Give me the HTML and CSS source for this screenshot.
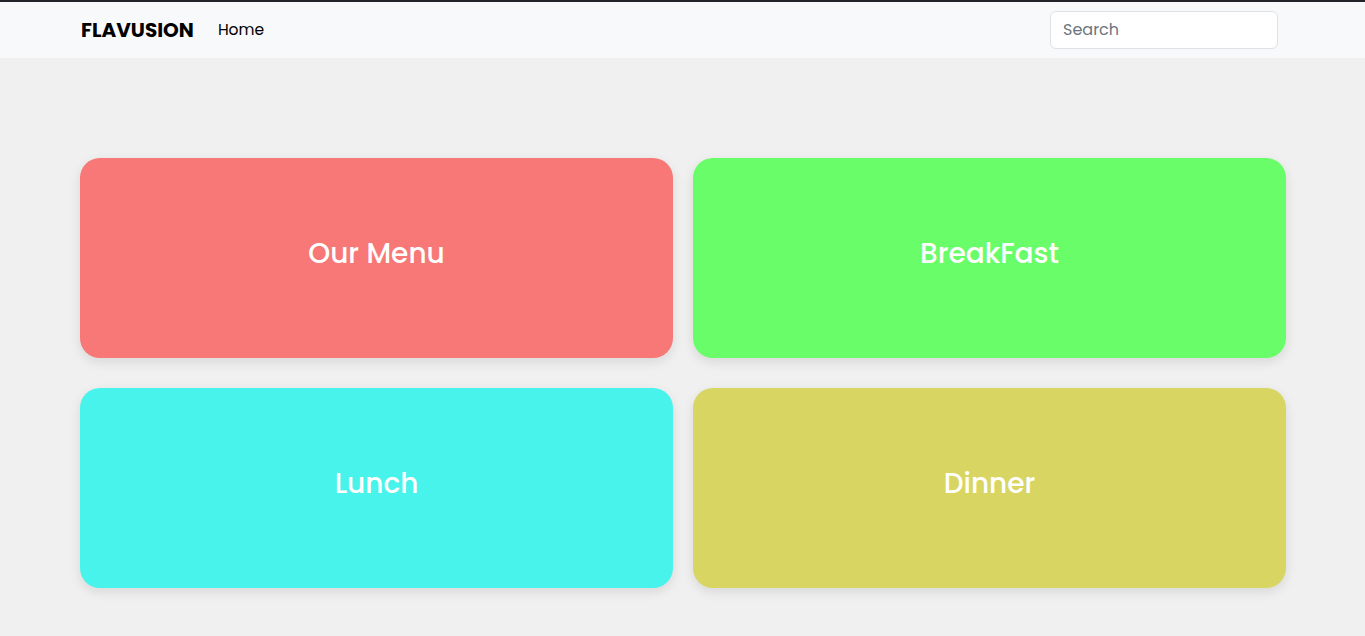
FILE: index.html
```html
<!DOCTYPE html>
<html lang="en">
<head>
<meta charset="utf-8">
<title>Flavusion</title>
<link rel="stylesheet" href="styles.css">
</head>
<body>
<nav class="navbar">
  <div class="nav-left">
    <a class="brand" href="#">FLAVUSION</a>
    <a class="nav-link" href="#">Home</a>
  </div>
  <input class="search" type="text" placeholder="Search">
</nav>
<main class="grid">
  <div class="card card-red">Our Menu</div>
  <div class="card card-green">BreakFast</div>
  <div class="card card-cyan">Lunch</div>
  <div class="card card-yellow">Dinner</div>
</main>
</body>
</html>
```
FILE: styles.css
```css
* { box-sizing: border-box; }
html, body { margin: 0; padding: 0; }
body {
  background: #f0f0f0;
  font-family: "Poppins", "Open Sans", "DejaVu Sans", sans-serif;
  border-top: 2px solid #212529;
  color: #000;
}
.navbar {
  height: 56px;
  background: #f8f9fa;
  display: flex;
  align-items: center;
  justify-content: space-between;
  padding: 0 87px 0 80px;
}
.nav-left { display: flex; align-items: center; gap: 24px; }
.brand {
  font-weight: 700;
  font-size: 20px;
  color: #000;
  text-decoration: none;
  line-height: 1;
  margin-left: 1px;
}
.nav-link {
  font-size: 15.5px;
  color: #000;
  text-decoration: none;
  line-height: 1;
}
.search {
  width: 228px;
  height: 38px;
  border: 1px solid #dee2e6;
  border-radius: 6px;
  background: #fff;
  padding: 0 12px;
  font-family: inherit;
  font-size: 16px;
  color: #212529;
  outline: none;
  margin-top: -1px;
}
.search::placeholder { color: #6c757d; }
.grid {
  display: grid;
  grid-template-columns: 1fr 1fr;
  column-gap: 20px;
  row-gap: 30px;
  padding: 100px 79px 40px 80px;
}
.card {
  height: 200px;
  border-radius: 20px;
  display: flex;
  align-items: center;
  justify-content: center;
  color: #fff;
  font-size: 28px;
  font-weight: 500;
  box-shadow: 0 4px 12px rgba(0, 0, 0, 0.1);
  padding-bottom: 8px;
}
.card-red { background: #f87777; }
.card-green { background: #68fd69; }
.card-cyan { background: #48f3eb; }
.card-yellow { background: #d8d562; }
```
